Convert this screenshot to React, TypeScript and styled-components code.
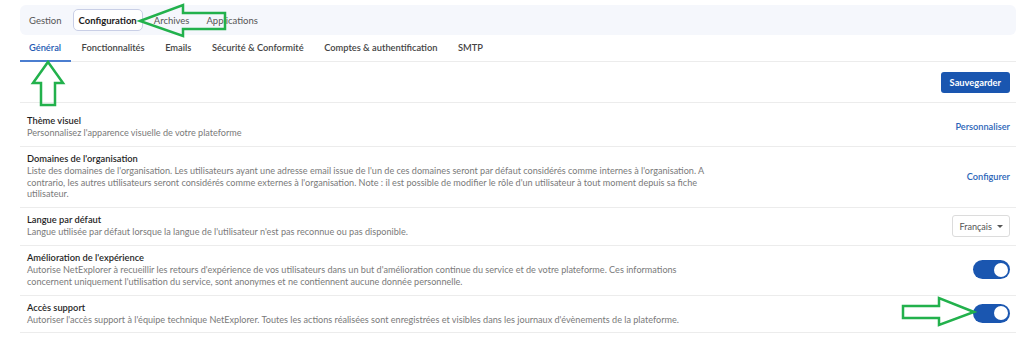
import React, { useState } from 'react';
import styled, { createGlobalStyle } from 'styled-components';

const GlobalStyle = createGlobalStyle`
  html, body {
    margin: 0;
    padding: 0;
    background: #ffffff;
  }
  body {
    font-family: 'Lato', 'Open Sans', sans-serif;
    color: #222;
  }
`;

const Page = styled.div`
  position: relative;
  width: 1026px;
  height: 338px;
  padding: 5px 10px 0 20px;
  box-sizing: border-box;
  overflow: hidden;
`;

const TopBar = styled.div`
  display: flex;
  align-items: center;
  gap: 5px;
  height: 30px;
  padding: 0 3px;
  background: #f5f7fc;
  border-radius: 6px;
`;

const TopTab = styled.div<{ $active?: boolean }>`
  display: flex;
  align-items: center;
  height: 22px;
  padding: 0 5px;
  box-sizing: border-box;
  font-size: 9.5px;
  font-weight: ${(p) => (p.$active ? 700 : 400)};
  color: ${(p) => (p.$active ? '#1c1c1c' : '#555')};
  background: ${(p) => (p.$active ? '#fff' : 'transparent')};
  border: 1px solid ${(p) => (p.$active ? '#c9cfe6' : 'transparent')};
  border-radius: 5px;
`;

const SubTabs = styled.div`
  display: flex;
  gap: 1.5px;
  height: 26px;
  border-bottom: 1px solid #ececec;
`;

const SubTab = styled.div<{ $active?: boolean }>`
  display: flex;
  align-items: center;
  padding: 0 10px 0 9px;
  font-size: 9.3px;
  font-weight: 600;
  color: ${(p) => (p.$active ? '#2259b2' : '#444')};
  border-bottom: 2px solid ${(p) => (p.$active ? '#4b7ed0' : 'transparent')};
  margin-bottom: -1px;
`;

const Toolbar = styled.div`
  display: flex;
  justify-content: flex-end;
  align-items: center;
  height: 40px;
  padding-right: 6px;
  border-bottom: 1px solid #ececec;
`;

const SaveButton = styled.button`
  height: 21px;
  padding: 0 9px;
  border: none;
  border-radius: 3px;
  background: #1a56b0;
  color: #fff;
  font-family: inherit;
  font-size: 9.3px;
  font-weight: 700;
`;

const Rows = styled.div`
  padding-top: 6px;
`;

const Row = styled.div`
  display: flex;
  align-items: center;
  justify-content: space-between;
  padding: 6px 6px 7px 7px;
  border-bottom: 1px solid #ececec;
`;

const Text = styled.div`
  max-width: 685px;
`;

const Title = styled.div`
  font-size: 9.3px;
  font-weight: 600;
  line-height: 12px;
  color: #1f1f1f;
`;

const Desc = styled.div`
  font-size: 9.1px;
  line-height: 11.8px;
  color: #7a7a7a;
`;

const Link = styled.a`
  font-size: 9.2px;
  font-weight: 600;
  color: #2a64b8;
  text-decoration: none;
`;

const Select = styled.div`
  display: flex;
  align-items: center;
  gap: 5px;
  height: 22px;
  padding: 0 6px;
  box-sizing: border-box;
  border: 1px solid #dcdcdc;
  border-radius: 3px;
  font-size: 9.1px;
  color: #555;
`;

const Caret = styled.span`
  width: 0;
  height: 0;
  border-left: 3px solid transparent;
  border-right: 3px solid transparent;
  border-top: 3px solid #555;
`;

const Toggle = styled.button<{ $on: boolean }>`
  position: relative;
  width: 37px;
  height: 19px;
  border: none;
  padding: 0;
  border-radius: 10px;
  background: ${(p) => (p.$on ? '#1a56b0' : '#ccc')};
  cursor: pointer;

  &::after {
    content: '';
    position: absolute;
    top: 2.5px;
    left: ${(p) => (p.$on ? '20.5px' : '2.5px')};
    width: 14px;
    height: 14px;
    border-radius: 50%;
    background: #fff;
  }
`;

const Annotations = styled.svg`
  position: absolute;
  left: 0;
  top: 0;
  pointer-events: none;
`;

function Arrows() {
  const stroke = { fill: 'none', stroke: '#22b14c', strokeWidth: 2.5, strokeLinejoin: 'miter' as const };
  return (
    <Annotations width={1026} height={338} viewBox="0 0 1026 338">
      <polygon points="140,21 183,5 183,13 225,13 225,29 183,29 183,36" {...stroke} />
      <polygon points="48,62 63,83 55,83 55,105 41,105 41,83 33,83" {...stroke} />
      <polygon points="974,312 939,298 939,306 903,306 903,318 939,318 939,325" {...stroke} />
    </Annotations>
  );
}

export default function App() {
  const [experience, setExperience] = useState(true);
  const [support, setSupport] = useState(true);

  return (
    <>
      <GlobalStyle />
      <Page>
        <TopBar>
          <TopTab>Gestion</TopTab>
          <TopTab $active>Configuration</TopTab>
          <TopTab>Archives</TopTab>
          <TopTab>Applications</TopTab>
        </TopBar>
        <SubTabs>
          <SubTab $active>Général</SubTab>
          <SubTab>Fonctionnalités</SubTab>
          <SubTab>Emails</SubTab>
          <SubTab>Sécurité &amp; Conformité</SubTab>
          <SubTab>Comptes &amp; authentification</SubTab>
          <SubTab>SMTP</SubTab>
        </SubTabs>
        <Toolbar>
          <SaveButton>Sauvegarder</SaveButton>
        </Toolbar>
        <Rows>
          <Row>
            <Text>
              <Title>Thème visuel</Title>
              <Desc>Personnalisez l'apparence visuelle de votre plateforme</Desc>
            </Text>
            <Link>Personnaliser</Link>
          </Row>
          <Row>
            <Text>
              <Title>Domaines de l'organisation</Title>
              <Desc>
                Liste des domaines de l'organisation. Les utilisateurs ayant une adresse email issue de l'un de ces
                domaines seront par défaut considérés comme internes à l'organisation. A contrario, les autres
                utilisateurs seront considérés comme externes à l'organisation. Note : il est possible de modifier le
                rôle d'un utilisateur à tout moment depuis sa fiche utilisateur.
              </Desc>
            </Text>
            <Link>Configurer</Link>
          </Row>
          <Row>
            <Text>
              <Title>Langue par défaut</Title>
              <Desc>Langue utilisée par défaut lorsque la langue de l'utilisateur n'est pas reconnue ou pas disponible.</Desc>
            </Text>
            <Select>
              Français <Caret />
            </Select>
          </Row>
          <Row>
            <Text>
              <Title>Amélioration de l'expérience</Title>
              <Desc>
                Autorise NetExplorer à recueillir les retours d'expérience de vos utilisateurs dans un but
                d'amélioration continue du service et de votre plateforme. Ces informations concernent uniquement
                l'utilisation du service, sont anonymes et ne contiennent aucune donnée personnelle.
              </Desc>
            </Text>
            <Toggle $on={experience} onClick={() => setExperience(!experience)} />
          </Row>
          <Row>
            <Text>
              <Title>Accès support</Title>
              <Desc>
                Autoriser l'accès support à l'équipe technique NetExplorer. Toutes les actions réalisées sont
                enregistrées et visibles dans les journaux d'évènements de la plateforme.
              </Desc>
            </Text>
            <Toggle $on={support} onClick={() => setSupport(!support)} />
          </Row>
        </Rows>
        <Arrows />
      </Page>
    </>
  );
}
